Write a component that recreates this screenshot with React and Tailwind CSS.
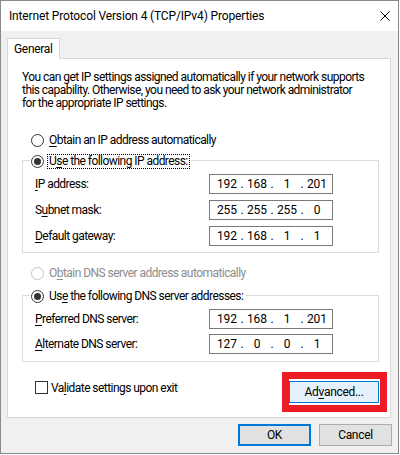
import React from 'react';

// access-key underline
const U = ({ children }) => (
  <span className="underline decoration-1 underline-offset-[2px]">{children}</span>
);

const Radio = ({ checked, disabled, focus, children }) => (
  <div className="flex items-center h-[16px]">
    <div
      className={`w-[13px] h-[13px] rounded-full border bg-white flex items-center justify-center ${
        disabled ? 'border-[#c4c4c4]' : 'border-[#333333]'
      }`}
    >
      {checked && <div className="w-[7px] h-[7px] rounded-full bg-[#333333]" />}
    </div>
    <span
      className={`ml-[3px] px-[1px] leading-[13px] border border-dotted ${
        focus ? 'border-black' : 'border-transparent'
      } ${disabled ? 'text-[#8d8d8d]' : ''}`}
    >
      {children}
    </span>
  </div>
);

const IpBox = ({ parts }) => (
  <div className="w-[124px] h-[20px] border border-[#7a7a7a] bg-white flex items-center pl-[5px] tracking-normal">
    {parts.map((p, i) => (
      <React.Fragment key={i}>
        <span className="w-[24px] text-center">{p}</span>
        {i < 3 && <span className="w-[6px] text-center">.</span>}
      </React.Fragment>
    ))}
  </div>
);

const Field = ({ label, parts }) => (
  <div className="flex items-center h-[20px]">
    <span className="w-[174px]">{label}</span>
    <IpBox parts={parts} />
  </div>
);

const GroupBox = ({ legend, children, className }) => (
  <div className={`relative w-[357px] border border-[#dcdcdc] pl-[12px] ${className}`}>
    <div className="absolute left-[7px] top-[-8px] bg-white pl-[1px] pr-[1px]">{legend}</div>
    {children}
  </div>
);

export default function App() {
  return (
    <div className="w-[400px] h-[455px] bg-white font-['Segoe_UI',Roboto,sans-serif] text-[12px] tracking-[-0.55px] whitespace-nowrap text-black">
      <div className="w-[399px] h-[454px] border border-[#8a8a8a] bg-[#f0f0f0] flex flex-col">
        {/* Title bar */}
        <div className="h-[30px] bg-white flex items-center justify-between pl-[8px] pr-[8px]">
          <span className="tracking-[-0.15px]">Internet Protocol Version 4 (TCP/IPv4) Properties</span>
          <svg width="10" height="10" viewBox="0 0 10 10">
            <path d="M0.5 0.5L9.5 9.5M9.5 0.5L0.5 9.5" stroke="#000" strokeWidth="1" />
          </svg>
        </div>

        <div className="flex flex-col pl-[6px] pt-[7px]">
          {/* Tab */}
          <div className="relative z-10 -mb-px w-[53px] h-[21px] border border-b-0 border-[#d9d9d9] bg-white flex items-center pl-[6px] tracking-[-0.3px]">
            General
          </div>

          {/* Panel */}
          <div className="w-[384px] h-[360px] border border-[#d9d9d9] bg-white pl-[14px] pr-[3px] pt-[12px] flex flex-col">
            <p className="leading-[13px]">
              You can get IP settings assigned automatically if your network supports
              <br />
              this capability. Otherwise, you need to ask your network administrator
              <br />
              for the appropriate IP settings.
            </p>

            <div className="mt-[22px] pl-[9px]">
              <Radio>
                <U>O</U>btain an IP address automatically
              </Radio>
            </div>

            <GroupBox
              className="mt-[12px] pt-[13px] pb-[6px]"
              legend={
                <Radio checked focus>
                  U<U>s</U>e the following IP address:
                </Radio>
              }
            >
              <div className="flex flex-col gap-[6px]">
                <Field label={<><U>I</U>P address:</>} parts={['192', '168', '1', '201']} />
                <Field label={<>S<U>u</U>bnet mask:</>} parts={['255', '255', '255', '0']} />
                <Field label={<><U>D</U>efault gateway:</>} parts={['192', '168', '1', '1']} />
              </div>
            </GroupBox>

            <div className="mt-[12px] pl-[9px]">
              <Radio disabled>
                O<U>b</U>tain DNS server address automatically
              </Radio>
            </div>

            <GroupBox
              className="mt-[14px] pt-[13px] pb-[7px]"
              legend={
                <Radio checked>
                  Us<U>e</U> the following DNS server addresses:
                </Radio>
              }
            >
              <div className="flex flex-col gap-[5px]">
                <Field label={<><U>P</U>referred DNS server:</>} parts={['192', '168', '1', '201']} />
                <Field label={<><U>A</U>lternate DNS server:</>} parts={['127', '0', '0', '1']} />
              </div>
            </GroupBox>

            <div className="mt-[10px] flex justify-between items-start">
              <div className="mt-[9px] pl-[13px] flex items-center h-[13px]">
                <div className="w-[13px] h-[13px] border border-[#333333] bg-white" />
                <span className="ml-[3px]">
                  Va<U>l</U>idate settings upon exit
                </span>
              </div>
              <div className="w-[105px] h-[40px] border-[7px] border-[#ed1c24] flex items-center">
                <button className="w-[90px] h-[22px] border border-[#0078d7] bg-[#e5f1fb] flex items-center justify-center tracking-[-0.3px]">
                  Ad<U>v</U>anced...
                </button>
              </div>
            </div>
          </div>

          {/* Dialog buttons */}
          <div className="mt-[6px] flex justify-end gap-[8px] pr-[6px] tracking-[-0.3px]">
            <button className="w-[73px] h-[22px] border-2 border-[#0078d7] bg-[#e1e1e1] flex items-center justify-center">
              OK
            </button>
            <button className="w-[73px] h-[22px] border border-[#adadad] bg-[#e1e1e1] flex items-center justify-center">
              Cancel
            </button>
          </div>
        </div>
      </div>
    </div>
  );
}
